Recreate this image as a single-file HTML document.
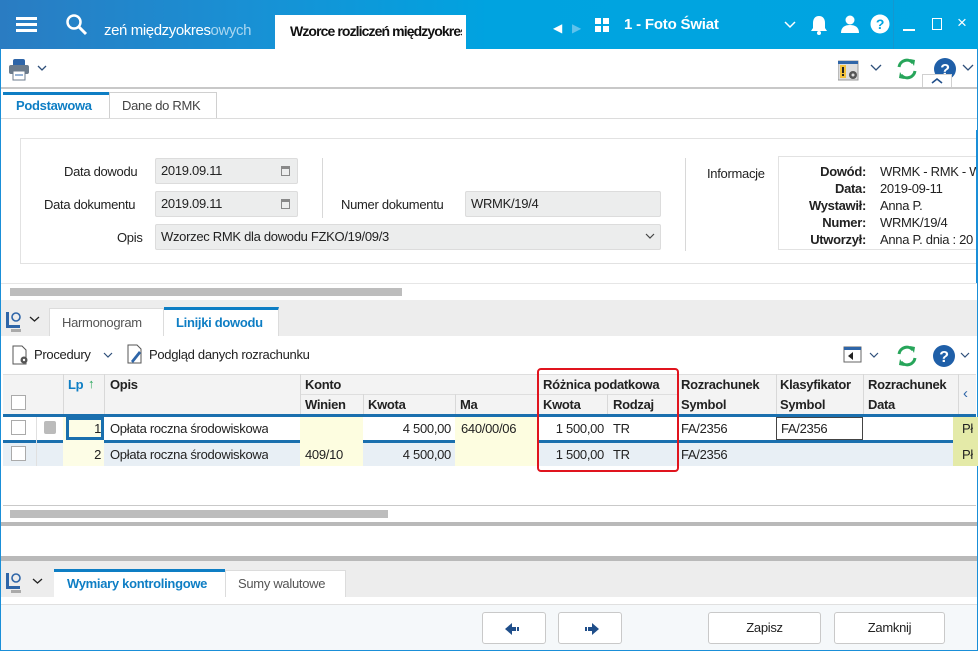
<!DOCTYPE html>
<html><head><meta charset="utf-8"><style>
*{box-sizing:border-box;margin:0;padding:0}
body{width:978px;height:651px;position:relative;overflow:hidden;background:#fff;font-family:"Liberation Sans",sans-serif;font-size:13px;letter-spacing:-0.3px;color:#222}
.a{position:absolute}
.t{position:absolute;white-space:nowrap}
.inp{position:absolute;background:#eceded;border:1px solid #dcdcdc;border-radius:2px;padding-left:5px;line-height:24px;height:26px}
.cell{position:absolute;white-space:nowrap;line-height:24px;overflow:hidden}
.vl{position:absolute;width:1px;background:#d8d8d8}
.btn{position:absolute;border:1px solid #c9c9c9;border-radius:3px;background:#fff;text-align:center;line-height:30px;height:32px}
</style></head><body>
<div class="a" style="left:0;top:0;width:978px;height:651px;border:1px solid #1a8fd8;border-top:none"></div>
<div class="a" style="left:0;top:0;width:978px;height:49px;background:linear-gradient(90deg,#2a7cc2 0%,#1990d4 25%,#00a3e0 50%,#00a5e1 100%)"></div>
<div class="a" style="left:16px;top:17px;width:21px;height:3px;background:#fff;box-shadow:0 6px 0 #fff,0 12px 0 #fff"></div>
<svg class="a" style="left:65px;top:13px" width="24" height="24"><circle cx="9" cy="9" r="6.5" stroke="#fff" stroke-width="2.5" fill="none"/><line x1="14" y1="14" x2="21" y2="21" stroke="#fff" stroke-width="3"/></svg>
<div class="t" style="left:104px;top:22px;color:#fff;font-size:15px;letter-spacing:-0.4px;width:152px;overflow:hidden">zeń międzyokres<span style="color:#a9d6f0">owych</span></div>
<div class="a" style="left:275px;top:15px;width:191px;height:34px;background:#fff"></div>
<div class="t" style="left:290px;top:23px;font-size:14px;font-weight:bold;color:#111;letter-spacing:-0.9px;width:172px;overflow:hidden">Wzorce rozliczeń międzyokres<span style="color:#bbb">owych</span></div>
<div class="t" style="left:553px;top:21px;color:#fff;font-size:12px">◀</div>
<div class="t" style="left:572px;top:21px;color:#5fc2ec;font-size:12px">▶</div>
<div class="a" style="left:595px;top:18px;width:6px;height:6px;background:#fff;box-shadow:8px 0 0 #fff,0 8px 0 #fff,8px 8px 0 #fff"></div>
<div class="t" style="left:624px;top:16px;color:#fff;font-size:15px;font-weight:bold;letter-spacing:-0.2px">1 - Foto Świat</div>
<svg class="a" style="left:784px;top:21px" width="12" height="8"><path d="M1 1l5 5 5-5" stroke="#fff" stroke-width="1.5" fill="none"/></svg>
<svg class="a" style="left:810px;top:15px" width="18" height="21"><path d="M9 1c-4 0-6 3-6 7v5l-2 3h16l-2-3v-5c0-4-2-7-6-7z" fill="#fff"/><circle cx="9" cy="18" r="2" fill="#fff"/></svg>
<svg class="a" style="left:840px;top:15px" width="20" height="18"><circle cx="10" cy="5" r="4.5" fill="#fff"/><path d="M1 18c0-6 4-8 9-8s9 2 9 8z" fill="#fff"/></svg>
<svg class="a" style="left:870px;top:14px" width="20" height="20"><circle cx="10" cy="10" r="9.5" fill="#fff"/><text x="10" y="15" font-size="14" font-weight="bold" text-anchor="middle" fill="#00a5e1" font-family="Liberation Sans">?</text></svg>
<div class="a" style="left:893px;top:0;width:1px;height:49px;background:#1497cf"></div>
<div class="a" style="left:903px;top:29px;width:12px;height:2px;background:#fff"></div>
<div class="a" style="left:932px;top:18px;width:10px;height:12px;border:1.5px solid #fff"></div>
<div class="t" style="left:957px;top:13px;color:#fff;font-size:17px">×</div>
<svg class="a" style="left:8px;top:57px" width="22" height="24"><rect x="5" y="2" width="12" height="8" rx="2" fill="#2e65a8"/><rect x="1" y="8" width="20" height="9" rx="2" fill="#6b7b8c"/><rect x="5" y="14" width="12" height="9" fill="#fff" stroke="#6b7b8c"/><line x1="7" y1="18" x2="15" y2="18" stroke="#2e65a8"/></svg>
<svg class="a" style="left:37px;top:65px" width="10" height="7"><path d="M1 1l4 4 4-4" stroke="#2e4f7a" stroke-width="1.3" fill="none"/></svg>
<svg class="a" style="left:838px;top:59px" width="22" height="22"><rect x="0" y="2" width="20" height="19" fill="#ddd" stroke="#999"/><rect x="0" y="2" width="20" height="3" fill="#2e65a8"/><rect x="2" y="6" width="6" height="13" fill="#f3c23a"/><rect x="4" y="8" width="2" height="6" fill="#222"/><rect x="4" y="15" width="2" height="2" fill="#222"/><circle cx="15" cy="16" r="4" fill="#555"/><circle cx="15" cy="16" r="1.5" fill="#ddd"/></svg>
<svg class="a" style="left:870px;top:64px" width="12" height="8"><path d="M1 1l5 5 5-5" stroke="#2e4f7a" stroke-width="1.3" fill="none"/></svg>
<svg class="a" style="left:895px;top:57px" width="24" height="24"><path d="M4 10a8 8 0 0 1 14-4" stroke="#27a55a" stroke-width="3" fill="none"/><path d="M15 2l5 1-1 6z" fill="#27a55a"/><path d="M20 14a8 8 0 0 1-14 4" stroke="#27a55a" stroke-width="3" fill="none"/><path d="M9 22l-5-1 1-6z" fill="#27a55a"/></svg>
<svg class="a" style="left:933px;top:57px" width="24" height="24"><circle cx="12" cy="12" r="11" fill="#1f5fa8"/><text x="12" y="18" font-size="16" font-weight="bold" text-anchor="middle" fill="#fff" font-family="Liberation Sans">?</text></svg>
<svg class="a" style="left:962px;top:64px" width="12" height="8"><path d="M1 1l5 5 5-5" stroke="#2e4f7a" stroke-width="1.3" fill="none"/></svg>
<div class="a" style="left:922px;top:74px;width:30px;height:15px;border:1px solid #d0d0d0;border-bottom:none;background:#fff"></div>
<svg class="a" style="left:931px;top:77px" width="12" height="8"><path d="M1 6l5-4 5 4" stroke="#1f4e8a" stroke-width="1.6" fill="none"/></svg>
<div class="a" style="left:1px;top:87px;width:976px;height:2px;background:#c8c8c8"></div>
<div class="a" style="left:3px;top:92px;width:106px;height:27px;border-top:3px solid #0e7ec4;background:#fff"></div>
<div class="t" style="left:16px;top:98px;color:#0e7ec4;font-weight:bold">Podstawowa</div>
<div class="a" style="left:109px;top:92px;width:108px;height:27px;border:1px solid #d0d0d0;border-bottom:none;background:#fff"></div>
<div class="t" style="left:122px;top:98px;color:#444">Dane do RMK</div>
<div class="a" style="left:1px;top:118px;width:976px;height:1px;background:#dcdcdc"></div>
<div class="a" style="left:20px;top:138px;width:958px;height:126px;border:1px solid #e2e2e2;border-right:none"></div>
<div class="t" style="left:64px;top:164px">Data dowodu</div>
<div class="inp" style="left:155px;top:158px;width:143px">2019.09.11</div>
<div class="t" style="left:44px;top:197px">Data dokumentu</div>
<div class="inp" style="left:155px;top:191px;width:143px">2019.09.11</div>
<div class="a" style="left:281px;top:166px;width:9px;height:10px;border:1.5px solid #888;border-top-width:3px"></div>
<div class="a" style="left:281px;top:199px;width:9px;height:10px;border:1.5px solid #888;border-top-width:3px"></div>
<div class="t" style="left:117px;top:230px">Opis</div>
<div class="inp" style="left:155px;top:224px;width:506px">Wzorzec RMK dla dowodu FZKO/19/09/3</div>
<svg class="a" style="left:645px;top:233px" width="10" height="7"><path d="M1 1l4 4 4-4" stroke="#444" stroke-width="1.2" fill="none"/></svg>
<div class="vl" style="left:322px;top:158px;height:60px"></div>
<div class="t" style="left:341px;top:197px">Numer dokumentu</div>
<div class="inp" style="left:465px;top:191px;width:196px">WRMK/19/4</div>
<div class="vl" style="left:685px;top:158px;height:93px"></div>
<div class="t" style="left:707px;top:166px">Informacje</div>
<div class="a" style="left:778px;top:156px;width:200px;height:94px;border:1px solid #e2e2e2;border-right:none"></div>
<div class="t" style="left:780px;top:163px;width:86px;text-align:right;font-weight:bold;line-height:17px">Dowód:<br>Data:<br>Wystawił:<br>Numer:<br>Utworzył:</div>
<div class="t" style="left:880px;top:163px;line-height:17px;width:96px;overflow:hidden">WRMK - RMK - W<br>2019-09-11<br>Anna P.<br>WRMK/19/4<br>Anna P. dnia : 20</div>
<div class="a" style="left:976px;top:130px;width:2px;height:170px;background:#1a8fd8"></div>
<div class="a" style="left:1px;top:283px;width:976px;height:17px;background:#fff;border-top:1px solid #e6e6e6"></div>
<div class="a" style="left:10px;top:288px;width:392px;height:8px;background:#bdbdbd"></div>
<div class="a" style="left:1px;top:300px;width:976px;height:36px;background:#ededed"></div>
<svg class="a" style="left:5px;top:310px" width="20" height="22"><rect x="1" y="2" width="3" height="16" fill="#2e65a8"/><rect x="1" y="15" width="14" height="3" fill="#2e65a8"/><circle cx="11" cy="7" r="4" stroke="#2e65a8" stroke-width="1.6" fill="none"/><rect x="6" y="19" width="10" height="3" fill="#aaa"/></svg>
<svg class="a" style="left:29px;top:316px" width="11" height="7"><path d="M1 1l4.5 4 4.5-4" stroke="#222" stroke-width="1.3" fill="none"/></svg>
<div class="a" style="left:49px;top:308px;width:115px;height:28px;background:#fff;border:1px solid #dcdcdc;border-bottom:none"></div>
<div class="t" style="left:62px;top:315px;color:#555">Harmonogram</div>
<div class="a" style="left:164px;top:307px;width:115px;height:29px;background:#fff;border-top:3px solid #0e7ec4;border-right:1px solid #dcdcdc"></div>
<div class="t" style="left:176px;top:315px;color:#0e7ec4;font-weight:bold">Linijki dowodu</div>
<svg class="a" style="left:11px;top:345px" width="20" height="20"><path d="M2 1h9l4 4v14h-13z" fill="#fff" stroke="#555"/><circle cx="13" cy="15" r="3.5" fill="#555"/><circle cx="13" cy="15" r="1.2" fill="#fff"/></svg>
<div class="t" style="left:34px;top:347px">Procedury</div>
<svg class="a" style="left:103px;top:352px" width="10" height="7"><path d="M1 1l4 4 4-4" stroke="#2e4f7a" stroke-width="1.2" fill="none"/></svg>
<svg class="a" style="left:125px;top:344px" width="22" height="20"><path d="M3 1h9l4 4v14h-13z" fill="#fff" stroke="#555"/><path d="M6 17l8-10 2 2-8 10z" fill="#2e65a8"/></svg>
<div class="t" style="left:149px;top:347px">Podgląd danych rozrachunku</div>
<svg class="a" style="left:843px;top:346px" width="20" height="18"><rect x="1" y="1" width="17" height="15" fill="#fff" stroke="#666"/><rect x="1" y="1" width="17" height="3" fill="#2e65a8"/><path d="M5 10l5-4v8z" fill="#222"/></svg>
<svg class="a" style="left:869px;top:352px" width="10" height="7"><path d="M1 1l4 4 4-4" stroke="#2e4f7a" stroke-width="1.2" fill="none"/></svg>
<svg class="a" style="left:895px;top:344px" width="24" height="24"><path d="M4 10a8 8 0 0 1 14-4" stroke="#27a55a" stroke-width="3" fill="none"/><path d="M15 2l5 1-1 6z" fill="#27a55a"/><path d="M20 14a8 8 0 0 1-14 4" stroke="#27a55a" stroke-width="3" fill="none"/><path d="M9 22l-5-1 1-6z" fill="#27a55a"/></svg>
<svg class="a" style="left:932px;top:344px" width="24" height="24"><circle cx="12" cy="12" r="11" fill="#1f5fa8"/><text x="12" y="18" font-size="16" font-weight="bold" text-anchor="middle" fill="#fff" font-family="Liberation Sans">?</text></svg>
<svg class="a" style="left:960px;top:352px" width="10" height="7"><path d="M1 1l4 4 4-4" stroke="#2e4f7a" stroke-width="1.2" fill="none"/></svg>
<div class="a" style="left:3px;top:374px;width:973px;height:40px;background:#f3f3f3;border-top:1px solid #dedede"></div>
<div class="a" style="left:300px;top:394px;width:378px;height:1px;background:#dedede"></div>
<div class="vl" style="left:63px;top:374px;height:40px"></div>
<div class="vl" style="left:104px;top:374px;height:40px"></div>
<div class="vl" style="left:300px;top:374px;height:40px"></div>
<div class="vl" style="left:363px;top:394px;height:20px"></div>
<div class="vl" style="left:455px;top:394px;height:20px"></div>
<div class="vl" style="left:537px;top:374px;height:40px"></div>
<div class="vl" style="left:607px;top:394px;height:20px"></div>
<div class="vl" style="left:678px;top:374px;height:40px"></div>
<div class="vl" style="left:776px;top:374px;height:40px"></div>
<div class="vl" style="left:863px;top:374px;height:40px"></div>
<div class="vl" style="left:958px;top:374px;height:40px"></div>
<div class="a" style="left:11px;top:395px;width:15px;height:15px;border:1px solid #aaa;background:#fff"></div>
<div class="t" style="left:68px;top:377px;color:#0e7ec4;font-weight:bold">Lp</div>
<div class="t" style="left:88px;top:376px;color:#27a55a;font-weight:bold">↑</div>
<div class="t" style="left:110px;top:377px;font-weight:bold">Opis</div>
<div class="t" style="left:305px;top:377px;font-weight:bold">Konto</div>
<div class="t" style="left:305px;top:397px;font-weight:bold">Winien</div>
<div class="t" style="left:368px;top:397px;font-weight:bold">Kwota</div>
<div class="t" style="left:460px;top:397px;font-weight:bold">Ma</div>
<div class="t" style="left:543px;top:377px;font-weight:bold">Różnica podatkowa</div>
<div class="t" style="left:543px;top:397px;font-weight:bold">Kwota</div>
<div class="t" style="left:613px;top:397px;font-weight:bold">Rodzaj</div>
<div class="t" style="left:681px;top:377px;font-weight:bold">Rozrachunek</div>
<div class="t" style="left:681px;top:397px;font-weight:bold">Symbol</div>
<div class="t" style="left:780px;top:377px;font-weight:bold">Klasyfikator</div>
<div class="t" style="left:780px;top:397px;font-weight:bold">Symbol</div>
<div class="t" style="left:868px;top:377px;font-weight:bold">Rozrachunek</div>
<div class="t" style="left:868px;top:397px;font-weight:bold">Data</div>
<div class="t" style="left:963px;top:385px;color:#2e65a8;font-size:15px">‹</div>
<div class="a" style="left:3px;top:414px;width:973px;height:3px;background:#1a6fae"></div>
<div class="a" style="left:3px;top:417px;width:973px;height:23px;background:#fff"></div>
<div class="a" style="left:3px;top:440px;width:973px;height:3px;background:#1a6fae"></div>
<div class="a" style="left:3px;top:443px;width:973px;height:23px;background:#e8eff5"></div>
<div class="a" style="left:63px;top:417px;width:41px;height:49px;background:#fdfde6"></div>
<div class="a" style="left:300px;top:417px;width:63px;height:49px;background:#fdfde0"></div>
<div class="a" style="left:455px;top:417px;width:82px;height:49px;background:#fdfde0"></div>
<div class="a" style="left:953px;top:417px;width:25px;height:49px;background:#e4eaa8"></div>
<div class="a" style="left:66px;top:417px;width:38px;height:23px;border:3px solid #1a6fae"></div>
<div class="a" style="left:776px;top:417px;width:87px;height:23px;border:1px solid #444"></div>
<div class="a" style="left:11px;top:420px;width:15px;height:15px;border:1px solid #aaa;background:#fff"></div>
<div class="a" style="left:44px;top:421px;width:12px;height:13px;background:#bbb;border-radius:2px"></div>
<div class="a" style="left:11px;top:446px;width:15px;height:15px;border:1px solid #aaa;background:#fff"></div>
<div class="vl" style="left:36px;top:417px;height:49px;background:#e0e0e0"></div>
<div class="cell" style="left:70px;top:417px;width:31px;text-align:right">1</div>
<div class="cell" style="left:110px;top:417px">Opłata roczna środowiskowa</div>
<div class="cell" style="left:363px;top:417px;width:88px;text-align:right">4 500,00</div>
<div class="cell" style="left:461px;top:417px">640/00/06</div>
<div class="cell" style="left:537px;top:417px;width:67px;text-align:right">1 500,00</div>
<div class="cell" style="left:613px;top:417px">TR</div>
<div class="cell" style="left:681px;top:417px">FA/2356</div>
<div class="cell" style="left:781px;top:417px">FA/2356</div>
<div class="cell" style="left:962px;top:417px">Pł</div>
<div class="cell" style="left:70px;top:443px;width:31px;text-align:right">2</div>
<div class="cell" style="left:110px;top:443px">Opłata roczna środowiskowa</div>
<div class="cell" style="left:305px;top:443px">409/10</div>
<div class="cell" style="left:363px;top:443px;width:88px;text-align:right">4 500,00</div>
<div class="cell" style="left:537px;top:443px;width:67px;text-align:right">1 500,00</div>
<div class="cell" style="left:613px;top:443px">TR</div>
<div class="cell" style="left:681px;top:443px">FA/2356</div>
<div class="cell" style="left:962px;top:443px">Pł</div>
<div class="a" style="left:537px;top:368px;width:142px;height:104px;border:2px solid #e0141e;border-radius:4px"></div>
<div class="a" style="left:3px;top:505px;width:973px;height:1px;background:#c9c9c9"></div>
<div class="a" style="left:10px;top:510px;width:378px;height:8px;background:#bdbdbd"></div>
<div class="a" style="left:1px;top:522px;width:976px;height:4px;background:#b9b9b9"></div>
<div class="a" style="left:1px;top:556px;width:976px;height:5px;background:#b9b9b9"></div>
<div class="a" style="left:1px;top:561px;width:976px;height:36px;background:#ededed"></div>
<svg class="a" style="left:5px;top:571px" width="20" height="22"><rect x="1" y="2" width="3" height="16" fill="#2e65a8"/><rect x="1" y="15" width="14" height="3" fill="#2e65a8"/><circle cx="11" cy="7" r="4" stroke="#2e65a8" stroke-width="1.6" fill="none"/><rect x="6" y="19" width="10" height="3" fill="#aaa"/></svg>
<svg class="a" style="left:32px;top:578px" width="11" height="7"><path d="M1 1l4.5 4 4.5-4" stroke="#222" stroke-width="1.3" fill="none"/></svg>
<div class="a" style="left:54px;top:569px;width:171px;height:28px;background:#fff;border-top:3px solid #0e7ec4"></div>
<div class="t" style="left:67px;top:576px;color:#0e7ec4;font-weight:bold">Wymiary kontrolingowe</div>
<div class="a" style="left:225px;top:570px;width:121px;height:27px;background:#fff;border:1px solid #dcdcdc;border-bottom:none"></div>
<div class="t" style="left:238px;top:576px;color:#555">Sumy walutowe</div>
<div class="a" style="left:1px;top:604px;width:976px;height:46px;background:#f5f8fa;border-top:1px solid #e0e0e0"></div>
<div class="btn" style="left:482px;top:612px;width:64px"><svg width="20" height="14" style="margin-top:9px"><path d="M1 7l7-6v4h4v4h-4v4z" fill="#1f4e8a"/><rect x="13" y="5" width="2" height="4" fill="#1f4e8a"/></svg></div>
<div class="btn" style="left:558px;top:612px;width:64px"><svg width="20" height="14" style="margin-top:9px"><path d="M19 7l-7-6v4h-4v4h4v4z" fill="#1f4e8a"/><rect x="5" y="5" width="2" height="4" fill="#1f4e8a"/></svg></div>
<div class="btn" style="left:708px;top:612px;width:113px">Zapisz</div>
<div class="btn" style="left:834px;top:612px;width:111px">Zamknij</div>
</body></html>
